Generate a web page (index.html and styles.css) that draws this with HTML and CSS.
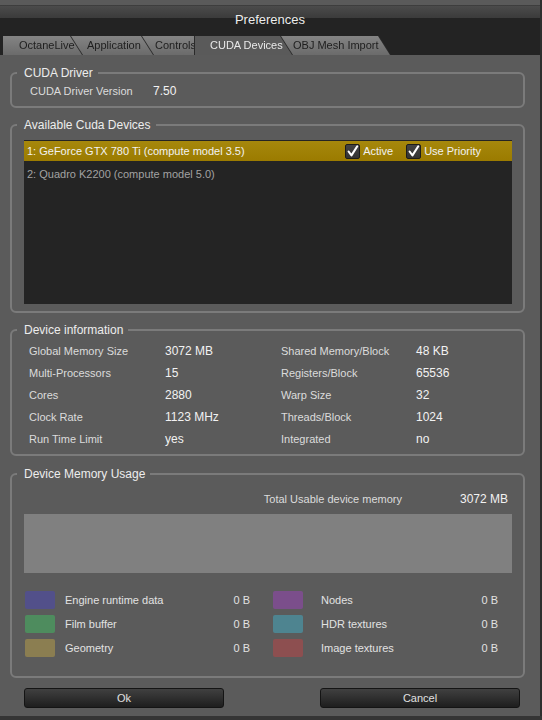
FILE: index.html
```html
<!DOCTYPE html>
<html lang="en">
<head>
  <meta charset="UTF-8" />
  <title>Preferences</title>
  <link rel="stylesheet" href="styles.css">
</head>
<body>
<div class="window">

  <div class="titlebar">Preferences</div>

  <div class="tabs">
    <div class="tab t1"><span>OctaneLive</span></div>
    <div class="tab t2"><span>Application</span></div>
    <div class="tab t3"><span>Controls</span></div>
    <div class="tab t4 active"><span>CUDA Devices</span></div>
    <div class="tab t5"><span>OBJ Mesh Import</span></div>
  </div>

  <fieldset class="group driver">
    <legend>CUDA Driver</legend>
    <div class="driver-row">
      <span class="label">CUDA Driver Version</span>
      <span class="value">7.50</span>
    </div>
  </fieldset>

  <fieldset class="group devices">
    <legend>Available Cuda Devices</legend>
    <div class="device-list">
      <div class="device selected">
        <span>1: GeForce GTX 780 Ti (compute model 3.5)</span>
        <div class="flags">
          <label class="flag">
            <span class="check"><svg viewBox="0 0 15 15"><path d="M3 7.5 L6.3 12 L13 1.5"/></svg></span>Active
          </label>
          <label class="flag">
            <span class="check"><svg viewBox="0 0 15 15"><path d="M3 7.5 L6.3 12 L13 1.5"/></svg></span>Use Priority
          </label>
        </div>
      </div>
      <div class="device">2: Quadro K2200 (compute model 5.0)</div>
    </div>
  </fieldset>

  <fieldset class="group info">
    <legend>Device information</legend>
    <div class="info-grid">
      <span class="label">Global Memory Size</span><span class="value">3072 MB</span>
      <span class="label">Shared Memory/Block</span><span class="value">48 KB</span>
      <span class="label">Multi-Processors</span><span class="value">15</span>
      <span class="label">Registers/Block</span><span class="value">65536</span>
      <span class="label">Cores</span><span class="value">2880</span>
      <span class="label">Warp Size</span><span class="value">32</span>
      <span class="label">Clock Rate</span><span class="value">1123 MHz</span>
      <span class="label">Threads/Block</span><span class="value">1024</span>
      <span class="label">Run Time Limit</span><span class="value">yes</span>
      <span class="label">Integrated</span><span class="value">no</span>
    </div>
  </fieldset>

  <fieldset class="group memory">
    <legend>Device Memory Usage</legend>
    <div class="total-row">
      <span class="label">Total Usable device memory</span>
      <span class="value">3072 MB</span>
    </div>
    <div class="usage-bar"></div>
    <div class="mem-legend">
      <div class="mem-col">
        <span class="swatch engine"></span><span>Engine runtime data</span><span>0 B</span>
        <span class="swatch film"></span><span>Film buffer</span><span>0 B</span>
        <span class="swatch geometry"></span><span>Geometry</span><span>0 B</span>
      </div>
      <div class="mem-col wide">
        <span class="swatch nodes"></span><span>Nodes</span><span>0 B</span>
        <span class="swatch hdr"></span><span>HDR textures</span><span>0 B</span>
        <span class="swatch image"></span><span>Image textures</span><span>0 B</span>
      </div>
    </div>
  </fieldset>

  <div class="buttons">
    <button class="btn">Ok</button>
    <button class="btn">Cancel</button>
  </div>

</div>
</body>
</html>
```

FILE: styles.css
```css
body {
  margin: 0;
  background: #353535;
  font-family: "Liberation Sans", Arial, sans-serif;
  font-size: 11px;
  color: #e2e2e2;
}
.window {
  width: 540px;
  height: 716px;
  background: #5b5b5b;
  border-right: 2px solid #2e2e2e;
  overflow: hidden;
}

/* title + tabs */
.titlebar {
  height: 23px;
  padding-top: 13px;
  line-height: 14px;
  font-size: 13px;
  text-align: center;
  color: #ececec;
  background: linear-gradient(#5a5a5a 0, #5a5a5a 5px, #303030 5px, #4b4b4b 6px, #3b3b3b 18px, #232323 18px);
}
.tabs {
  display: flex;
  height: 19px;
  padding-left: 3px;
  background: #232323;
}
.tab {
  position: relative;
  margin-right: -12px;
  filter: drop-shadow(1px 0 0 #2a2a2a);
}
.tab span {
  display: block;
  height: 19px;
  line-height: 19px;
  white-space: nowrap;
  overflow: hidden;
  color: #1e1e1e;
  background: linear-gradient(#848484, #6b6b6b);
  clip-path: polygon(0 0, calc(100% - 12px) 0, 100% 100%, 0 100%);
}
.t1 { width: 79px; z-index: 5; }
.t1 span { padding-left: 16px; }
.t2 { width: 83px; z-index: 4; }
.t2 span { padding-left: 17px; }
.t3 { width: 66px; z-index: 3; }
.t3 span { padding-left: 14px; }
.t4 { width: 97px; z-index: 6; }
.t4 span { padding-left: 15px; }
.t5 { width: 110px; z-index: 1; }
.t5 span { padding-left: 13px; }
.tab.active {
  filter: drop-shadow(1px 0 0 #2a2a2a) drop-shadow(-1px 0 0 #2a2a2a);
}
.tab.active span {
  color: #e8e8e8;
  background: #5a5a5a;
}

/* group boxes */
.group {
  margin: 10px 15px 0 10px;
  padding: 0 11px 7px 12px;
  border: 2px solid #7b7b7b;
  border-radius: 6px;
  min-width: 0;
}
.group legend {
  margin-left: -7px;
  padding: 0 5px 0 7px;
  font-size: 12px;
  line-height: 14px;
  color: #ededed;
}
.label { color: #dcdcdc; }
.value { font-size: 12px; color: #f2f2f2; }

.driver { margin-top: 11px; padding-top: 4px; padding-bottom: 8px; }
.driver-row {
  display: flex;
  height: 14px;
  line-height: 14px;
  padding-left: 6px;
}
.driver-row .label { width: 123px; }

.devices { padding-top: 8px; }
.device-list {
  height: 163px;
  padding-top: 1px;
  background: #242424;
}
.device {
  display: flex;
  align-items: center;
  height: 21px;
  padding: 2px 0 0 3px;
  color: #a2a2a2;
}
.device.selected {
  height: 20px;
  padding-top: 0;
  color: #f2f2f2;
  background: linear-gradient(#a6880c, #9b7b00);
}
.flags {
  display: flex;
  gap: 13px;
  margin-left: auto;
  padding-right: 31px;
}
.flag {
  display: flex;
  align-items: center;
  gap: 3px;
}
.check {
  width: 13px;
  height: 13px;
  border: 1px solid #1c1c1c;
  border-radius: 2px;
  background: linear-gradient(#444, #333);
}
.check svg {
  display: block;
  width: 13px;
  height: 13px;
  overflow: visible;
}
.check path {
  fill: none;
  stroke: #fff;
  stroke-width: 2.4;
  stroke-linecap: round;
  stroke-linejoin: round;
}

.info { padding-top: 3px; padding-bottom: 4px; }
.info-grid {
  display: grid;
  grid-template-columns: 136px 116px 135px 1fr;
  grid-auto-rows: 22px;
  align-items: center;
  padding-left: 5px;
}

.memory { margin-top: 11px; padding-top: 11px; padding-bottom: 16px; }
.total-row {
  display: flex;
  justify-content: flex-end;
  height: 14px;
  line-height: 14px;
  padding-right: 4px;
}
.total-row .value { width: 106px; text-align: right; }
.usage-bar {
  height: 59px;
  margin-top: 8px;
  background: #808080;
}
.mem-legend {
  display: flex;
  gap: 23px;
  margin-top: 15px;
  padding-left: 1px;
}
.mem-col {
  display: grid;
  grid-template-columns: 30px 1fr auto;
  grid-auto-rows: 24px;
  column-gap: 10px;
  align-items: center;
  width: 225px;
  color: #e2e2e2;
}
.mem-col.wide { column-gap: 18px; }
.swatch {
  height: 18px;
  border-radius: 2px;
}
.engine { background: #52508a; }
.film { background: #4e8c5e; }
.geometry { background: #8b7e51; }
.nodes { background: #7b4e8b; }
.hdr { background: #4e8490; }
.image { background: #8d4f50; }

/* dialog buttons */
.buttons {
  display: flex;
  justify-content: space-between;
  margin-top: 10px;
  padding: 0 20px 0 24px;
}
.btn {
  width: 200px;
  height: 20px;
  padding: 0;
  border: 1px solid #141414;
  border-radius: 3px;
  background: linear-gradient(#404040, #1e1e1e);
  color: #e0e0e0;
  font-family: inherit;
  font-size: 11px;
}
```
